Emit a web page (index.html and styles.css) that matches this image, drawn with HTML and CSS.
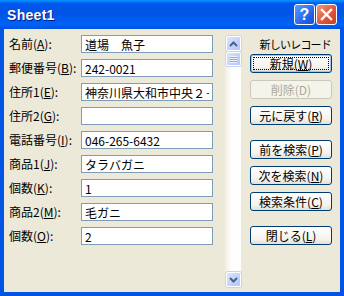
FILE: index.html
```html
<!DOCTYPE html>
<html>
<head>
  <title>Sheet1</title>
  <link rel="stylesheet" href="styles.css">
</head>
<body>
  <div class="window">
    <div class="titlebar">
      <span class="title">Sheet1</span>
      <div class="title-buttons">
        <span class="tbtn help">?</span>
        <span class="tbtn close">
          <svg width="13" height="13" viewBox="0 0 13 13"><path d="M2 2 L11 11 M11 2 L2 11" stroke="#fff" stroke-width="2.4" stroke-linecap="square"/></svg>
        </span>
      </div>
    </div>

    <div class="client">
      <div class="fields">
        <div class="row"><label>名前(<u>A</u>):</label><input type="text" value="道場　魚子" readonly></div>
        <div class="row"><label>郵便番号(<u>B</u>):</label><input type="text" value="242-0021" readonly></div>
        <div class="row"><label>住所1(<u>E</u>):</label><input type="text" value="神奈川県大和市中央２－１－１" readonly></div>
        <div class="row"><label>住所2(<u>G</u>):</label><input type="text" value="" readonly></div>
        <div class="row"><label>電話番号(<u>I</u>):</label><input type="text" value="046-265-6432" readonly></div>
        <div class="row"><label>商品1(<u>J</u>):</label><input type="text" value="タラバガニ" readonly></div>
        <div class="row"><label>個数(<u>K</u>):</label><input type="text" value="1" readonly></div>
        <div class="row"><label>商品2(<u>M</u>):</label><input type="text" value="毛ガニ" readonly></div>
        <div class="row"><label>個数(<u>O</u>):</label><input type="text" value="2" readonly></div>
      </div>

      <div class="scrollbar">
        <span class="sbtn">
          <svg width="9" height="6" viewBox="0 0 9 6"><polyline points="1,5 4.5,1.5 8,5" fill="none" stroke="#4d6185" stroke-width="2"/></svg>
        </span>
        <span class="thumb"><span class="grip"></span></span>
        <span class="sbtn down">
          <svg width="9" height="6" viewBox="0 0 9 6"><polyline points="1,1 4.5,4.5 8,1" fill="none" stroke="#4d6185" stroke-width="2"/></svg>
        </span>
      </div>

      <div class="commands">
        <div class="record-label">新しいレコード</div>
        <div class="group">
          <button class="cmd default"><span class="focus">新規(<u>W</u>)</span></button>
          <button class="cmd" disabled>削除(D)</button>
          <button class="cmd">元に戻す(<u>R</u>)</button>
        </div>
        <div class="group">
          <button class="cmd">前を検索(<u>P</u>)</button>
          <button class="cmd">次を検索(<u>N</u>)</button>
          <button class="cmd">検索条件(<u>C</u>)</button>
        </div>
        <div class="group">
          <button class="cmd">閉じる(<u>L</u>)</button>
        </div>
      </div>
    </div>
  </div>
</body>
</html>
```

FILE: styles.css
```css
body {
  margin: 0;
  font-family: "Noto Sans CJK JP", "Noto Sans", sans-serif;
  font-size: 12px;
}
.window {
  width: 344px;
  height: 296px;
  box-sizing: border-box;
  display: flex;
  flex-direction: column;
  background: #0055e5;
  padding: 0 4px 4px 4px;
}
.titlebar {
  height: 29px;
  margin: 0 -4px;
  padding: 0 7px 0 7px;
  display: flex;
  align-items: center;
  background: linear-gradient(#0a97ff 0%, #0058ee 12%, #0054e3 45%, #0062f7 85%, #0050e0 100%);
}
.title {
  flex: 1;
  color: #fff;
  font-family: "Liberation Sans", sans-serif;
  font-weight: bold;
  font-size: 14px;
  letter-spacing: 0.3px;
  text-shadow: 1px 1px #0a1883;
  padding-top: 1px;
}
.title-buttons {
  display: flex;
  gap: 1px;
}
.tbtn {
  width: 21px;
  height: 21px;
  box-sizing: border-box;
  border: 1px solid #fff;
  border-radius: 3px;
  display: flex;
  align-items: center;
  justify-content: center;
}
.help {
  background: linear-gradient(135deg, #5d9cff, #1f5fe8 70%, #1a4fd0);
  color: #fff;
  font-family: "Liberation Sans", sans-serif;
  font-weight: bold;
  font-size: 16px;
}
.close {
  background: linear-gradient(135deg, #ef9a7e, #e2563a 55%, #c83e1f);
}
.client {
  flex: 1;
  background: #ece9d8;
  display: flex;
  padding: 6px 8px 4px 5px;
}
.fields {
  width: 208px;
}
.row {
  display: flex;
  align-items: center;
  height: 18px;
  margin-bottom: 6px;
}
.row label {
  width: 72px;
  line-height: 18px;
  white-space: nowrap;
}
.row input {
  width: 132px;
  height: 18px;
  box-sizing: border-box;
  border: 1px solid #7f9db9;
  padding: 0 3px;
  margin: 0;
  font-family: "Noto Sans CJK JP", sans-serif;
  font-size: 12px;
  color: #000;
  background: #fff;
  outline: none;
}
.scrollbar {
  width: 16px;
  margin-left: 12px;
  display: flex;
  flex-direction: column;
  align-items: center;
  background: linear-gradient(to right, #f1efe6, #fdfdfa 40%, #fefefe);
}
.sbtn, .thumb {
  width: 15px;
  height: 15px;
  box-sizing: border-box;
  border: 1px solid #fff;
  border-radius: 2px;
  background: linear-gradient(135deg, #dbe6fd, #c0d1fb 60%, #b1c6f7);
  box-shadow: 0 0 0 1px #c6d4f5;
  display: flex;
  align-items: center;
  justify-content: center;
  margin-top: 1px;
}
.thumb {
  height: 14px;
}
.grip {
  width: 7px;
  height: 7px;
  background: repeating-linear-gradient(#eef4fe 0 1px, #8ca7df 1px 2px);
}
.down {
  margin-top: auto;
  margin-bottom: 1px;
}
.commands {
  width: 82px;
  margin-left: 9px;
  display: flex;
  flex-direction: column;
}
.record-label {
  height: 19px;
  line-height: 19px;
  text-align: right;
  padding-right: 1px;
  white-space: nowrap;
  font-size: 11px;
  letter-spacing: -0.8px;
}
.group {
  display: flex;
  flex-direction: column;
  gap: 7px;
  margin-bottom: 15px;
}
.cmd {
  height: 19px;
  width: 82px;
  box-sizing: border-box;
  margin: 0;
  padding: 0;
  border: 1px solid #003c74;
  border-radius: 3px;
  background: linear-gradient(#ffffff, #f4f3ee 70%, #e3e0d6);
  font-family: "Noto Sans CJK JP", sans-serif;
  font-size: 12px;
  line-height: 17px;
  color: #000;
  display: flex;
  align-items: center;
  justify-content: center;
  white-space: nowrap;
}
.cmd.default {
  box-shadow: inset 0 0 0 1px #a8c2f0;
  padding: 2px;
}
.focus {
  flex: 1;
  align-self: stretch;
  border: 1px dotted #000;
  display: flex;
  align-items: center;
  justify-content: center;
  line-height: 13px;
}
.cmd:disabled {
  border-color: #cac8bb;
  background: #f5f4ea;
  color: #aca899;
}
```
